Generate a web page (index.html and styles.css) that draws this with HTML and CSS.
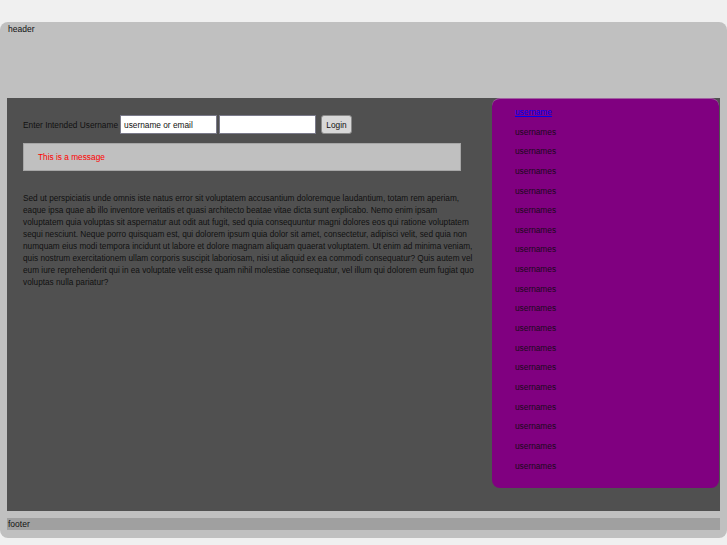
FILE: index.html
```html
<!DOCTYPE html>
<html>
<head>
<meta charset="utf-8">
<link rel="stylesheet" href="styles.css">
</head>
<body>
<div class="page">
  <div class="header">header</div>
  <div class="main">
    <div class="content">
      <form class="login">
        <label class="lbl">Enter Intended Username</label>
        <input class="field" type="text" value="username or email">
        <input class="field" type="password">
        <button class="btn" type="button">Login</button>
      </form>
      <div class="message">This is a message</div>
      <p class="text">Sed ut perspiciatis unde omnis iste natus error sit voluptatem accusantium doloremque laudantium, totam rem aperiam, eaque ipsa quae ab illo inventore veritatis et quasi architecto beatae vitae dicta sunt explicabo. Nemo enim ipsam voluptatem quia voluptas sit aspernatur aut odit aut fugit, sed quia consequuntur magni dolores eos qui ratione voluptatem sequi nesciunt. Neque porro quisquam est, qui dolorem ipsum quia dolor sit amet, consectetur, adipisci velit, sed quia non numquam eius modi tempora incidunt ut labore et dolore magnam aliquam quaerat voluptatem. Ut enim ad minima veniam, quis nostrum exercitationem ullam corporis suscipit laboriosam, nisi ut aliquid ex ea commodi consequatur? Quis autem vel eum iure reprehenderit qui in ea voluptate velit esse quam nihil molestiae consequatur, vel illum qui dolorem eum fugiat quo voluptas nulla pariatur?</p>
    </div>
    <ul class="sidebar">
      <li><a class="active" href="#">username</a></li>
      <li>usernames</li>
      <li>usernames</li>
      <li>usernames</li>
      <li>usernames</li>
      <li>usernames</li>
      <li>usernames</li>
      <li>usernames</li>
      <li>usernames</li>
      <li>usernames</li>
      <li>usernames</li>
      <li>usernames</li>
      <li>usernames</li>
      <li>usernames</li>
      <li>usernames</li>
      <li>usernames</li>
      <li>usernames</li>
      <li>usernames</li>
      <li>usernames</li>
    </ul>
  </div>
  <div class="footer">footer</div>
</div>
</body>
</html>
```
FILE: styles.css
```css
html, body {
  margin: 0;
  padding: 0;
}
body {
  background: #f0f0f0;
  font-family: "Liberation Sans", Arial, sans-serif;
  font-size: 8px;
  color: #1a1a1a;
  padding-top: 22px;
}
.page {
  background: #c0c0c0;
  border-radius: 8px;
  padding: 0 7px 8px 7px;
  width: 713px;
  box-sizing: content-box;
}
.header {
  height: 76px;
  padding: 2px 0 0 1px;
  box-sizing: border-box;
  line-height: 10px;
  font-size: 8.5px;
  color: #111;
}
.main {
  background: #505050;
  height: 413px;
  display: flex;
  align-items: flex-start;
}
.content {
  width: 485px;
  box-sizing: border-box;
  padding: 17px 7px 0 16px;
}
.login {
  display: flex;
  align-items: center;
  margin: 0;
  height: 19px;
}
.lbl {
  margin-right: 2px;
  font-size: 8.3px;
  color: #111;
}
.field {
  width: 97px;
  height: 19px;
  box-sizing: border-box;
  border: 1px solid #7a7a8a;
  background: #fff;
  font-family: "Liberation Sans", Arial, sans-serif;
  font-size: 8.3px;
  color: #111;
  padding: 0 3px;
  margin: 0 2px 0 0;
}
.btn {
  margin-left: 3px;
  height: 19px;
  width: 31px;
  padding: 0;
  border: 1px solid #8a8a8a;
  border-radius: 3px;
  background: #d8d8d8;
  font-family: "Liberation Sans", Arial, sans-serif;
  font-size: 8.3px;
  color: #111;
}
.message {
  margin-top: 9px;
  width: 438px;
  height: 28px;
  box-sizing: border-box;
  background: #c0c0c0;
  border: 1px solid #a6a6a6;
  color: #ff0000;
  padding-left: 14px;
  display: flex;
  align-items: center;
  font-size: 8.3px;
}
.text {
  margin: 22px 0 0 0;
  width: 455px;
  line-height: 12px;
  font-size: 8.25px;
  color: #111;
}
.sidebar {
  list-style: none;
  margin: 0;
  width: 227px;
  height: 390px;
  box-sizing: border-box;
  background: #800080;
  border-radius: 8px;
  padding: 7px 0 0 23px;
  display: flex;
  flex-direction: column;
  gap: 7.65px;
  border-top: 1px solid #a060a0;
}
.sidebar li {
  line-height: 12px;
  font-size: 8.3px;
  color: #1a0a1a;
}
.sidebar a.active {
  color: #0000ee;
  text-decoration: underline;
}
.footer {
  margin-top: 7px;
  background: #a0a0a0;
  height: 12px;
  line-height: 12px;
  padding-left: 1px;
  font-size: 8.5px;
  color: #111;
}
```
